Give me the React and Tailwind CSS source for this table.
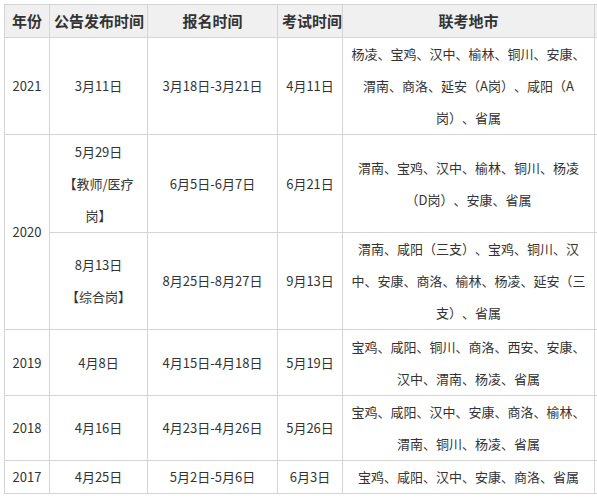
import React from 'react';

const font = { fontFamily: '"Microsoft YaHei", "Noto Sans CJK SC", "Noto Sans", sans-serif' };

const th = 'border border-[#d4d4d4] bg-[#f0f0f0] px-1 text-[15px] font-bold leading-[32px] text-[#333] text-center whitespace-nowrap';
const td = 'border border-[#d4d4d4] px-[6px] text-[13px] leading-[32px] text-[#333] text-center align-middle [text-spacing-trim:space-all]';

const Lines = ({ lines }) => (
  <>
    {lines.map((l, i) => (
      <div key={i} className="whitespace-nowrap">{l}</div>
    ))}
  </>
);

const rows = [
  {
    year: '2021',
    notice: ['3月11日'],
    signup: '3月18日-3月21日',
    exam: '4月11日',
    cities: ['杨凌、宝鸡、汉中、榆林、铜川、安康、', '渭南、商洛、延安（A岗）、咸阳（A', '岗）、省属'],
  },
];

export default function App() {
  return (
    <div className="w-[597px] h-[500px] overflow-hidden bg-white" style={font}>
      <div className="pt-[4px] pl-[4px]">
        <table className="table-fixed border-collapse w-[700px]">
          <colgroup>
            <col className="w-[45px]" />
            <col className="w-[98px]" />
            <col className="w-[130px]" />
            <col className="w-[65px]" />
            <col className="w-[252px]" />
            <col className="w-[110px]" />
          </colgroup>
          <thead>
            <tr>
              <th className={th}>年份</th>
              <th className={th}>公告发布时间</th>
              <th className={th}>报名时间</th>
              <th className={th}>考试时间</th>
              <th className={th}>联考地市</th>
              <th className={th + ' text-left'}>备注</th>
            </tr>
          </thead>
          <tbody>
            {rows.map((r) => (
              <tr key={r.year}>
                <td className={td}>{r.year}</td>
                <td className={td}><Lines lines={r.notice} /></td>
                <td className={td}>{r.signup}</td>
                <td className={td}>{r.exam}</td>
                <td className={td}><Lines lines={r.cities} /></td>
                <td className={td}></td>
              </tr>
            ))}
            <tr className="h-[98px]">
              <td className={td} rowSpan={2}>2020</td>
              <td className={td}><Lines lines={['5月29日', '【教师/医疗', '岗】']} /></td>
              <td className={td}>6月5日-6月7日</td>
              <td className={td}>6月21日</td>
              <td className={td}><Lines lines={['渭南、宝鸡、汉中、榆林、铜川、杨凌', '（D岗）、安康、省属']} /></td>
              <td className={td}></td>
            </tr>
            <tr className="h-[97px]">
              <td className={td}><Lines lines={['8月13日', '【综合岗】']} /></td>
              <td className={td}>8月25日-8月27日</td>
              <td className={td}>9月13日</td>
              <td className={td}><Lines lines={['渭南、咸阳（三支）、宝鸡、铜川、汉', '中、安康、商洛、榆林、杨凌、延安（三', '支）、省属']} /></td>
              <td className={td}></td>
            </tr>
            <tr className="h-[66px]">
              <td className={td}>2019</td>
              <td className={td}>4月8日</td>
              <td className={td}>4月15日-4月18日</td>
              <td className={td}>5月19日</td>
              <td className={td}><Lines lines={['宝鸡、咸阳、铜川、商洛、西安、安康、', '汉中、渭南、杨凌、省属']} /></td>
              <td className={td}></td>
            </tr>
            <tr className="h-[65px]">
              <td className={td}>2018</td>
              <td className={td}>4月16日</td>
              <td className={td}>4月23日-4月26日</td>
              <td className={td}>5月26日</td>
              <td className={td}><Lines lines={['宝鸡、咸阳、汉中、安康、商洛、榆林、', '渭南、铜川、杨凌、省属']} /></td>
              <td className={td}></td>
            </tr>
            <tr className="h-[33px]">
              <td className={td}>2017</td>
              <td className={td}>4月25日</td>
              <td className={td}>5月2日-5月6日</td>
              <td className={td}>6月3日</td>
              <td className={td}>宝鸡、咸阳、汉中、安康、商洛、省属</td>
              <td className={td}></td>
            </tr>
          </tbody>
        </table>
      </div>
    </div>
  );
}
